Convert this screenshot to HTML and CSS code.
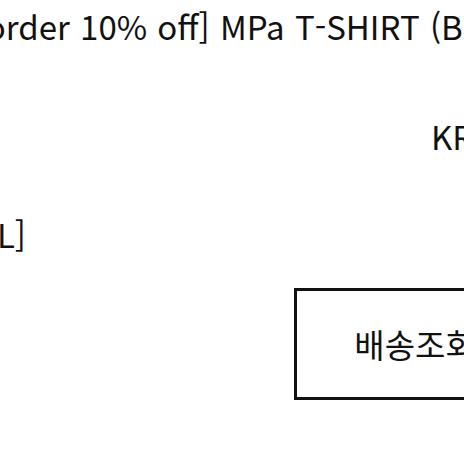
FILE: index.html
```html
<!DOCTYPE html>
<html lang="ko">
<head>
    <meta charset="UTF-8">
    <meta name="viewport" content="width=device-width, initial-scale=1.0">
    <title>주문상세</title>
    <link rel="stylesheet" href="styles.css">
</head>
<body>
    <div class="order-item">
        <div class="item-name">[1st order 10% off] MPa T-SHIRT (BLACK)</div>
        <div class="item-price">KRW 39,000</div>
        <div class="item-option"><span>[옵션: BLACK / L]</span></div>
        <div class="item-actions">
            <a class="btn-track" href="#">배송조회</a>
        </div>
    </div>
</body>
</html>
```

FILE: styles.css
```css
body {
    margin: 0;
    background-color: #fff;
    color: #111;
    font-family: "Noto Sans CJK KR", "Noto Sans", sans-serif;
    overflow: hidden;
}
.order-item {
    font-size: 33px;
    line-height: 46px;
    white-space: nowrap;
}
.item-name {
    margin: 3px 0 0 -81px;
    word-spacing: 1px;
}
.item-price {
    margin-top: 64px;
    padding-left: 431px;
}
/* option text hangs off to the left, right edge fixed */
.item-option {
    display: flex;
    justify-content: flex-end;
    width: 26px;
    margin-top: 52px;
}
.item-actions {
    margin-top: 31px;
    padding-left: 294px;
}
.btn-track {
    display: flex;
    align-items: center;
    justify-content: center;
    width: 242px;
    height: 112px;
    box-sizing: border-box;
    border: 3px solid #111;
    color: #111;
    text-decoration: none;
}
```
